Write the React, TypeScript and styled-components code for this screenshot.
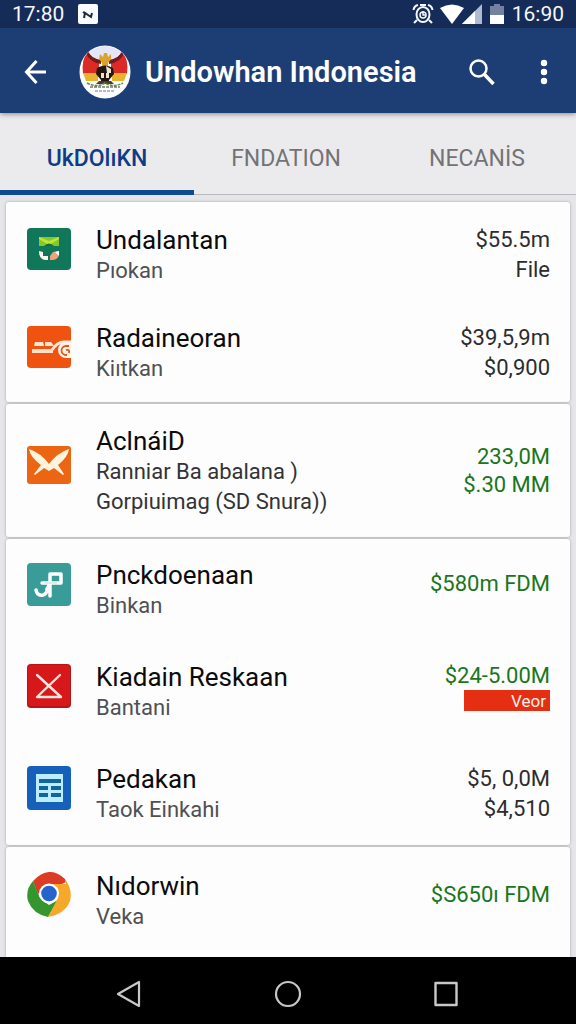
import React from "react";
import styled, { createGlobalStyle } from "styled-components";

const GlobalStyle = createGlobalStyle`
  * { box-sizing: border-box; }
  body { margin: 0; background: #e6e6ea; font-family: Roboto, "Liberation Sans", sans-serif; }
  button { border: 0; padding: 0; background: none; font: inherit; color: inherit; cursor: pointer; }
  svg { display: block; flex: none; }
`;

const Screen = styled.div`
  min-height: 100vh;
  display: flex;
  flex-direction: column;
`;

const StatusBar = styled.div`
  height: 28px;
  padding: 0 12px;
  display: flex;
  align-items: center;
  background: #162c58;
  color: #f4f7fc;
  font-size: 21px;
  line-height: 28px;
`;

const StatusIcons = styled.div`
  margin-left: auto;
  margin-right: 5px;
  display: flex;
  align-items: center;
  gap: 5px;
`;

const Notification = styled.span`
  margin-left: 14px;
`;

const AppBar = styled.header`
  height: 85px;
  padding: 2px 12px 0 16px;
  display: flex;
  align-items: center;
  background: #1d3e74;
  color: #fff;
  box-shadow: 0 1px 5px rgba(40, 30, 30, 0.5);
  z-index: 1;
`;

const IconButton = styled.button`
  width: 40px;
  height: 40px;
  display: flex;
  align-items: center;
  justify-content: center;
`;

const Emblem = styled.div`
  margin: 0 14px 0 23px;
`;

const Title = styled.h1`
  margin: 0;
  flex: 1;
  font-size: 29px;
  font-weight: 600;
  line-height: 36px;
  white-space: nowrap;
`;

const Actions = styled.div`
  display: flex;
  gap: 22px;
`;

const Tabs = styled.nav`
  height: 82px;
  display: grid;
  grid-template-columns: 194fr 184fr 198fr;
  border-bottom: 1px solid #b9babd;
  background: #ebebed;
`;

const Tab = styled.button<{ $active?: boolean }>`
  height: 82px;
  padding-top: 14px;
  border-bottom: 5px solid ${(p) => (p.$active ? "#104a91" : "transparent")};
  color: ${(p) => (p.$active ? "#0f3c86" : "#737376")};
  font-size: 23px;
  font-weight: ${(p) => (p.$active ? 500 : 400)};
`;

const List = styled.main`
  flex: 1;
  padding: 7px 6px 0;
  display: flex;
  flex-direction: column;
  gap: 2px;
`;

const Card = styled.section<{ $top?: number; $last?: boolean }>`
  padding-top: ${(p) => p.$top ?? 0}px;
  flex: ${(p) => (p.$last ? "1" : "none")};
  border-radius: ${(p) => (p.$last ? "3px 3px 0 0" : "3px")};
  background: #fdfdfd;
  box-shadow: 0 0 3px rgba(0, 0, 0, 0.3);
`;

const Row = styled.article<{ $height: number }>`
  min-height: ${(p) => p.$height}px;
  padding: 0 20px 0 21px;
  display: flex;
  align-items: center;
`;

const RowIcon = styled.div`
  margin: 0 25px 12px 0;
`;

const Labels = styled.div`
  flex: 1;
  white-space: nowrap;
`;

const Name = styled.h2`
  margin: 0;
  font-size: 26px;
  font-weight: 400;
  line-height: 32px;
  color: #0b0b0c;
`;

const Detail = styled.p<{ $dark?: boolean }>`
  margin: 0;
  font-size: 22px;
  line-height: 30px;
  color: ${(p) => (p.$dark ? "#333336" : "#505053")};
`;

const Amounts = styled.div<{ $green?: boolean; $raised?: boolean }>`
  margin-bottom: ${(p) => (p.$raised ? 12 : 0)}px;
  display: flex;
  flex-direction: column;
  align-items: flex-end;
  font-size: 22px;
  line-height: ${(p) => (p.$green ? 28 : 30)}px;
  color: ${(p) => (p.$green ? "#19761b" : "#2c2c2f")};
  white-space: nowrap;
`;

const Badge = styled.span`
  width: 86px;
  height: 21px;
  padding-right: 4px;
  background: #e42f12;
  color: #fff0ea;
  font-size: 17px;
  line-height: 22px;
  text-align: right;
`;

const SystemBar = styled.nav`
  height: 67px;
  padding: 6px 51px 0 50px;
  display: flex;
  align-items: center;
  justify-content: space-between;
  background: #000;
`;

const SystemButton = styled(IconButton)`
  width: 158px;
`;

const NotificationIcon = () => (
  <svg width="20" height="20" viewBox="0 0 20 20">
    <rect width="20" height="20" rx="2" fill="#fafcff" />
    <path d="M6 14l1-5 6 4 1-4M5 8l3 2" fill="none" stroke="#222a3a" strokeWidth="2" />
  </svg>
);

const AlarmIcon = () => (
  <svg width="22" height="22" viewBox="0 0 22 22" fill="none" stroke="#f4f7fc" strokeWidth="2">
    <ellipse cx="11" cy="11.500" rx="6.500" ry="7.500" />
    <path d="M1.500 7Q2 3 6 2M20.500 7Q20 3 16 2M5 17l-3 3M17 17l3 3M8 2h6" />
    <circle cx="11" cy="12" r="3" strokeWidth="1.500" />
    <path d="M11 8v4h2" strokeWidth="1.500" />
  </svg>
);

const SignalIcons = () => (
  <svg width="68" height="22" viewBox="0 0 68 22">
    <path d="M1 5Q13-2 25 5L13 21Z" fill="#fff" />
    <path d="M23 21L43 1V21Z" fill="#aebbd2" />
    <path d="M23 21L36 8V21Z" fill="#fff" />
    <path d="M51 3h4V1h6v2h4v9H51Z" fill="#74829f" />
    <path d="M51 12h14v9H51Z" fill="#fff" />
  </svg>
);

const BackIcon = () => (
  <svg width="24" height="26" viewBox="0 0 24 26" fill="none" stroke="#fff" strokeWidth="3">
    <path d="M12.500 2L2.500 13l10 11M3 13h19" />
  </svg>
);

const SearchIcon = () => (
  <svg width="28" height="28" viewBox="0 0 28 28" fill="none" stroke="#fff">
    <circle cx="10.500" cy="10.500" r="8" strokeWidth="2.500" />
    <path d="M16.500 16.500l9 9.500" strokeWidth="3.500" />
  </svg>
);

const MoreIcon = () => (
  <svg width="8" height="26" viewBox="0 0 8 26" fill="#fff">
    <circle cx="4" cy="4" r="3.200" />
    <circle cx="4" cy="13" r="3.200" />
    <circle cx="4" cy="22" r="3.200" />
  </svg>
);

const EmblemIcon = () => (
  <svg width="52" height="54" viewBox="0 0 52 54">
    <defs>
      <clipPath id="emblem">
        <ellipse cx="26" cy="27" rx="25" ry="26" />
      </clipPath>
    </defs>
    <ellipse cx="26" cy="27" rx="25.500" ry="26.500" fill="#fdfdff" />
    <g clipPath="url(#emblem)">
      <path d="M9 6L26 0 43 6 34 16H18Z" fill="#e3e6f6" />
      <path d="M9 5Q10 13 20 16v13H4Q2 15 9 5ZM43 5Q42 13 32 16v13h16Q50 15 43 5Z" fill="#dc2a24" />
      <path d="M4 28h15v8H7ZM48 28H33v8h12Z" fill="#e9b32b" />
      <path d="M9 5Q11 13 22 15v4Q10 17 7 8ZM43 5Q41 13 30 15v4q12-2 15-11Z" fill="#761b1c" />
      <path d="M21 9l3 3 1-4h3l1 4 3-3v5l-3 4v4h-6v-4l-3-4Z" fill="#dca32a" />
      <path d="M18 23q8-5 16 0l1 6-5 6v4h-8v-4l-5-6Z" fill="#241712" />
      <path d="M27 21l5 3v4h-4ZM22 28h3v5h-3ZM27 28h3v5h-3Z" fill="#efe2cf" />
      <path d="M20 36h12l3 3H17Z" fill="#4b3a1d" />
      <path d="M8 38q10 5 18 0 8 5 18 0M11 42h30" fill="none" stroke="#6f8060" strokeWidth="1.500" strokeDasharray="3 1" />
      <path d="M16 46h20" stroke="#77787c" strokeDasharray="3 1" />
    </g>
  </svg>
);

const PeopleIcon = () => (
  <svg width="44" height="44" viewBox="0 0 44 44">
    <rect y="1" width="44" height="42" rx="4" fill="#11775b" />
    <path d="M12 10h20v9H12Z" fill="#83c92e" />
    <path d="M12 10l10 4 10-4v2l-10 6-10-6Z" fill="#c3e336" />
    <path d="M17 19q5-5 10 0Z" fill="#176b38" />
    <path d="M12 24l4 1v4h5v4q-9 1-9-9Z" fill="#fff8f0" />
    <path d="M23 29l3-4 6-1q1 10-9 9Z" fill="#f2a17f" />
    <path d="M28 25l4-1v5Z" fill="#fff" />
  </svg>
);

const BedIcon = () => (
  <svg width="44" height="44" viewBox="0 0 44 44">
    <rect y="1" width="44" height="42" rx="4" fill="#f0520f" />
    <path d="M8 17h8l1 4H7ZM18 17h6l3 4h-9Z" fill="#ffe6d2" />
    <path d="M5 24h21v4H5Z" fill="#ffe0cb" />
    <path d="M25 25q5-8 12-8h7" fill="none" stroke="#ffe9da" strokeWidth="3" />
    <path d="M44 17h-5a8 8 0 0 0 0 16h5Z" fill="#fff2e7" />
    <path d="M42 21h-3a4 4 0 0 0 0 9h1M39 25q4-1 3 3" fill="none" stroke="#e0561c" strokeWidth="1.800" />
  </svg>
);

const MailIcon = () => (
  <svg width="44" height="44" viewBox="0 0 44 44">
    <rect y="3" width="44" height="38" rx="3" fill="#ec6512" />
    <path d="M2 6Q14 10 22 21 30 10 42 6 41 14 31 22l6 9-1 1-9-7-5 3-5-3-9 7-1-1 7-9Q3 14 2 6Z" fill="#fff3de" />
  </svg>
);

const NoteIcon = () => (
  <svg width="44" height="44" viewBox="0 0 44 44">
    <rect y="1" width="44" height="43" rx="4" fill="#3a9c99" />
    <path d="M23 34V12h11v9H15M9 28q1 6 7 5 4-1 4-6l3-5" fill="none" stroke="#fff" strokeWidth="3.500" strokeLinejoin="round" strokeLinecap="round" />
    <path d="M17 21h13" stroke="#d8f0ef" strokeWidth="2" />
  </svg>
);

const CrossIcon = () => (
  <svg width="44" height="44" viewBox="0 0 44 44">
    <rect width="44" height="44" rx="4" fill="#b81318" />
    <rect x="1" y="1" width="42" height="41" rx="4" fill="#d7181b" />
    <path d="M10 11l24 22M33 11L10 33h24" fill="none" stroke="#ffe3df" strokeWidth="2.400" strokeLinecap="round" strokeLinejoin="round" />
  </svg>
);

const TableIcon = () => (
  <svg width="44" height="44" viewBox="0 0 44 44">
    <rect width="44" height="44" rx="4" fill="#1560ba" />
    <path d="M9 8h27v28H9Z" fill="#bcecff" />
    <path d="M12 13h22v4H12ZM12 20h9v4h-9ZM24 20h10v4H24ZM12 27h9v4h-9ZM24 27h10v4H24Z" fill="#12649e" />
  </svg>
);

const ChromeIcon = () => (
  <svg width="44" height="46" viewBox="0 0 44 46">
    <path d="M6 9Q22-8 38 7l1 3-4 2H22L11 22Z" fill="#dc3b25" />
    <path d="M6 9Q-2 18 1 29 6 42 21 45L31 28 22 33 13 26Z" fill="#35952f" />
    <path d="M38 7Q46 18 43 29 38 42 21 45L31 26V16l-6-4h14Z" fill="#f6a82a" />
    <circle cx="22" cy="21.500" r="10" fill="#fff" />
    <circle cx="22" cy="21.500" r="7.800" fill="#2464cf" />
  </svg>
);

type Item = {
  icon: React.ReactNode;
  name: string;
  details: string[];
  amounts: string[];
  green?: boolean;
  raised?: boolean;
  badge?: string;
};

type Group = { height: number; top?: number; items: Item[] };

const groups: Group[] = [
  {
    height: 98,
    top: 4,
    items: [
      { icon: <PeopleIcon />, name: "Undalantan", details: ["Pıokan"], amounts: ["$55.5m", "File"] },
      { icon: <BedIcon />, name: "Radaineoran", details: ["Kiıtkan"], amounts: ["$39,5,9m", "$0,900"] },
    ],
  },
  {
    height: 133,
    items: [
      {
        icon: <MailIcon />,
        name: "AclnáiD",
        details: ["Ranniar Ba abalana )", "Gorpiuimag (SD Snura))"],
        amounts: ["233,0M", "$.30 MM"],
        green: true,
      },
    ],
  },
  {
    height: 102,
    items: [
      { icon: <NoteIcon />, name: "Pnckdoenaan", details: ["Binkan"], amounts: ["$580m FDM"], green: true, raised: true },
      {
        icon: <CrossIcon />,
        name: "Kiadain Reskaan",
        details: ["Bantani"],
        amounts: ["$24-5.00M"],
        green: true,
        raised: true,
        badge: "Veor",
      },
      { icon: <TableIcon />, name: "Pedakan", details: ["Taok Einkahi"], amounts: ["$5, 0,0M", "$4,510"] },
    ],
  },
  {
    height: 102,
    top: 3,
    items: [
      { icon: <ChromeIcon />, name: "Nıdorwin", details: ["Veka"], amounts: ["$S650ı FDM"], green: true, raised: true },
    ],
  },
];

export default function App() {
  return (
    <Screen>
      <GlobalStyle />
      <StatusBar>
        <span>17:80</span>
        <Notification>
          <NotificationIcon />
        </Notification>
        <StatusIcons>
          <AlarmIcon />
          <SignalIcons />
        </StatusIcons>
        <span>16:90</span>
      </StatusBar>
      <AppBar>
        <IconButton aria-label="Back">
          <BackIcon />
        </IconButton>
        <Emblem>
          <EmblemIcon />
        </Emblem>
        <Title>Undowhan Indonesia</Title>
        <Actions>
          <IconButton aria-label="Search">
            <SearchIcon />
          </IconButton>
          <IconButton aria-label="More">
            <MoreIcon />
          </IconButton>
        </Actions>
      </AppBar>
      <Tabs>
        <Tab $active>UkDOlıKN</Tab>
        <Tab>FNDATION</Tab>
        <Tab>NECANİS</Tab>
      </Tabs>
      <List>
        {groups.map((group, i) => (
          <Card key={i} $top={group.top} $last={i === groups.length - 1}>
            {group.items.map((item) => (
              <Row key={item.name} $height={group.height}>
                <RowIcon>{item.icon}</RowIcon>
                <Labels>
                  <Name>{item.name}</Name>
                  {item.details.map((line) => (
                    <Detail key={line} $dark={item.details.length > 1}>
                      {line}
                    </Detail>
                  ))}
                </Labels>
                <Amounts $green={item.green} $raised={item.raised}>
                  {item.amounts.map((amount) => (
                    <span key={amount}>{amount}</span>
                  ))}
                  {item.badge && <Badge>{item.badge}</Badge>}
                </Amounts>
              </Row>
            ))}
          </Card>
        ))}
      </List>
      <SystemBar>
        <SystemButton aria-label="System back">
          <svg width="26" height="28" viewBox="0 0 26 28" fill="none" stroke="#c8c8c8" strokeWidth="2.200" strokeLinejoin="round">
            <path d="M23 2v24L2 14Z" />
          </svg>
        </SystemButton>
        <SystemButton aria-label="Home">
          <svg width="28" height="28" viewBox="0 0 28 28" fill="none" stroke="#c8c8c8" strokeWidth="2.200">
            <circle cx="14" cy="14" r="12" />
          </svg>
        </SystemButton>
        <SystemButton aria-label="Recent apps">
          <svg width="24" height="26" viewBox="0 0 24 26" fill="none" stroke="#c8c8c8" strokeWidth="2.400" strokeLinejoin="round">
            <path d="M1.500 2h21v22h-21Z" />
          </svg>
        </SystemButton>
      </SystemBar>
    </Screen>
  );
}
